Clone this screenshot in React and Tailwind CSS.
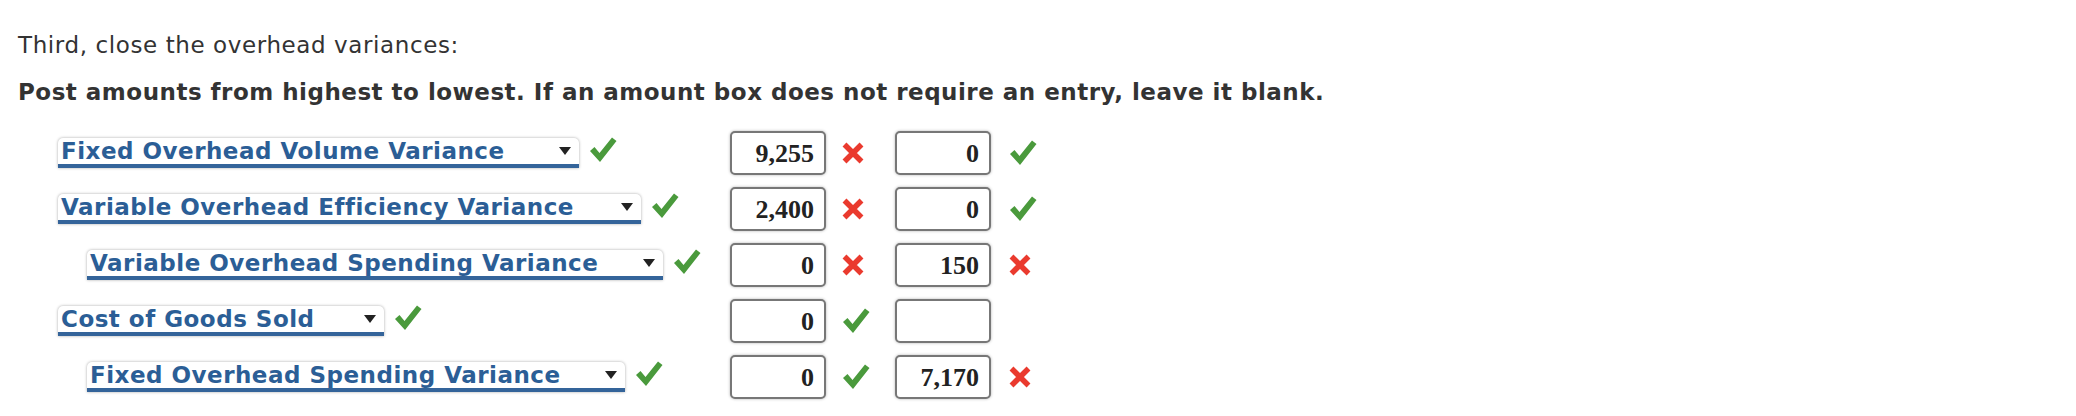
const rows = [
  { label: 'Fixed Overhead Volume Variance', indent: false, w: 521, a: '9,255', aOk: false, b: '0', bOk: true },
  { label: 'Variable Overhead Efficiency Variance', indent: false, w: 583, a: '2,400', aOk: false, b: '0', bOk: true },
  { label: 'Variable Overhead Spending Variance', indent: true, w: 576, a: '0', aOk: false, b: '150', bOk: false },
  { label: 'Cost of Goods Sold', indent: false, w: 326, a: '0', aOk: true, b: '', bOk: null },
  { label: 'Fixed Overhead Spending Variance', indent: true, w: 538, a: '0', aOk: true, b: '7,170', bOk: false },
];

function Check() {
  return (
    <svg width="28" height="28" viewBox="0 0 28 28">
      <path d="M1 15 L5.5 11 L10.5 17 L23 1.5 L27.5 5 L11 26 Z" fill="#4a9a3c" />
    </svg>
  );
}

function Cross() {
  return (
    <svg width="22" height="22" viewBox="0 0 22 22">
      <path d="M2.5 2.5 L19.5 19.5 M19.5 2.5 L2.5 19.5" stroke="#ea3a2e" strokeWidth="5.5" strokeLinecap="butt" />
    </svg>
  );
}

function Mark({ ok }) {
  if (ok === null) return null;
  return ok ? <Check /> : <Cross />;
}

function AmountBox({ value }) {
  return (
    <div className="w-[96px] h-[44px] border-2 border-[#777] rounded-[5px] shadow-[0_0_3px_rgba(0,0,0,0.3)] bg-white flex items-center justify-end pr-[10px] font-['Liberation_Serif',serif] font-bold text-[26px] text-[#222]">
      {value}
    </div>
  );
}

export default function App() {
  return (
    <div className="w-[2076px] h-[416px] bg-white text-[#333] font-['DejaVu_Sans',Verdana,sans-serif]">
      <p className="pt-[31px] pl-[18px] text-[23px] tracking-[0.6px] leading-[28px]">Third, close the overhead variances:</p>
      <p className="pt-[19px] pl-[18px] text-[23px] tracking-[0.5px] leading-[28px] font-bold">
        Post amounts from highest to lowest. If an amount box does not require an entry, leave it blank.
      </p>

      <div className="pt-[19px] flex flex-col">
        {rows.map((r, i) => (
          <div key={i} className="h-[56px] flex items-center">
            <div className={`w-[730px] flex items-center ${r.indent ? 'pl-[87px]' : 'pl-[58px]'}`}>
              <div
                className="h-[30px] bg-white rounded-t-[5px] shadow-[0_0_3px_rgba(0,0,0,0.35)] border-b-[4px] border-[#34649a] flex items-center justify-between pl-[3px] pr-[8px]"
                style={{ width: r.w }}
              >
                <span className="text-[23px] tracking-[0.5px] font-bold text-[#2b5e96] leading-none">{r.label}</span>
                <span className="w-0 h-0 border-l-[6px] border-r-[6px] border-t-[8px] border-l-transparent border-r-transparent border-t-[#222]" />
              </div>
              <div className="ml-[10px] mt-[-6px]">
                <Check />
              </div>
            </div>
            <AmountBox value={r.a} />
            <div className="w-[69px] pl-[16px] flex items-center">
              <Mark ok={r.aOk} />
            </div>
            <AmountBox value={r.b} />
            <div className="pl-[18px] flex items-center">
              <Mark ok={r.bOk} />
            </div>
          </div>
        ))}
      </div>
    </div>
  );
}
